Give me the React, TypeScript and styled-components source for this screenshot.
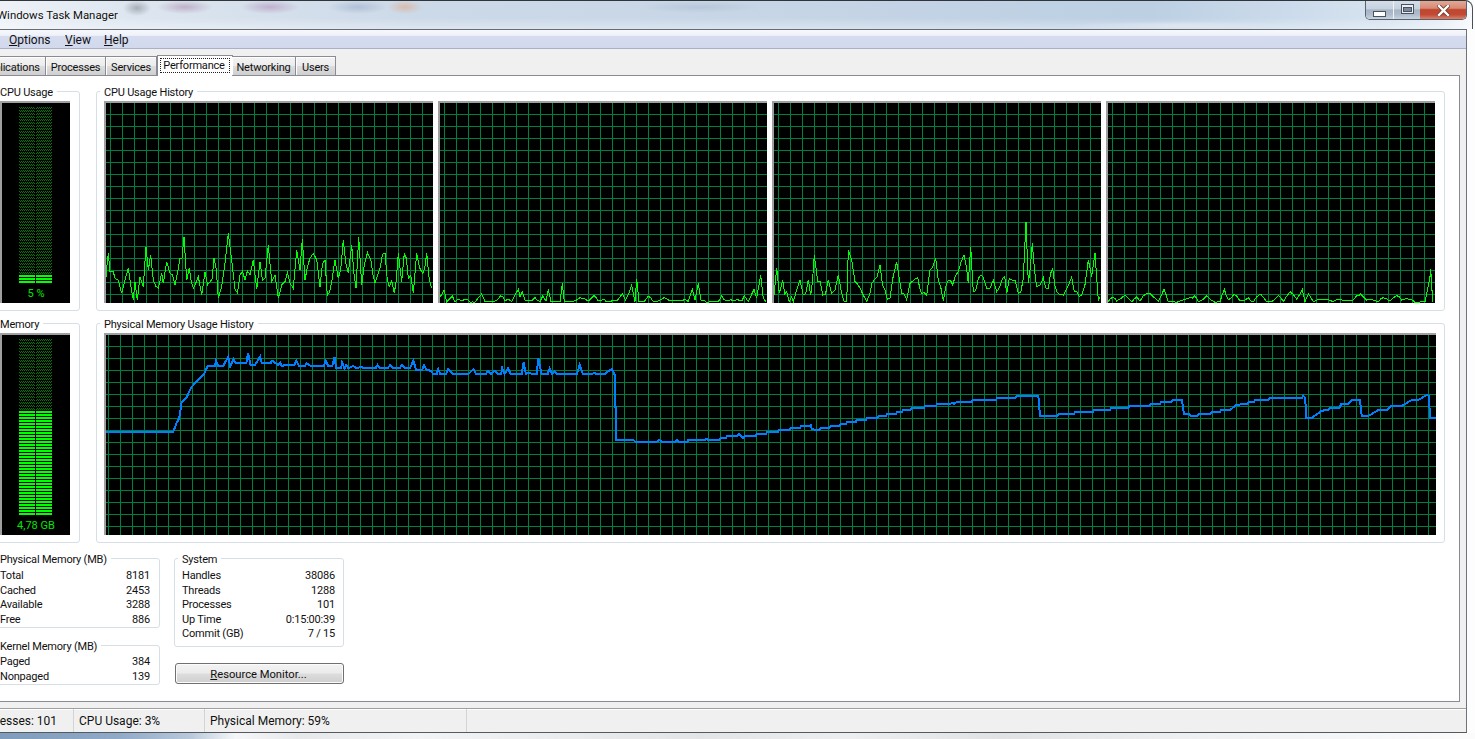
import React, { useId } from "react";
import styled, { createGlobalStyle } from "styled-components";

type Pt = [number, number];

const GlobalStyle = createGlobalStyle`
  html, body { margin: 0; padding: 0; background: #fff; overflow: hidden; }
  * { box-sizing: border-box; }
`;

const FONT = `"Roboto", "Noto Sans", "Liberation Sans", sans-serif`;

const Frame = styled.div`
  width: 1475px;
  height: 739px;
  display: flex;
  flex-direction: column;
  overflow: hidden;
  background: #fdfdfe;
  font-family: ${FONT};
  font-size: 11px;
  letter-spacing: -0.2px;
  color: #111;
`;

const TitleBar = styled.div`
  height: 29px;
  flex: none;
  display: flex;
  align-items: flex-start;
  margin-right: 2px;
  border-top: 1px solid #30353a;
  border-right: 1px solid #4a5056;
  border-top-right-radius: 8px;
  background:
    radial-gradient(ellipse 14px 8px at 137px 7px, #a8aeb8 0%, transparent 100%),
    radial-gradient(ellipse 28px 7px at 185px 6px, #bfb0c9 0%, transparent 100%),
    radial-gradient(ellipse 30px 7px at 270px 6px, #c0b0cd 0%, transparent 100%),
    radial-gradient(ellipse 30px 7px at 358px 6px, #b0c0d6 0%, transparent 100%),
    radial-gradient(ellipse 18px 7px at 405px 6px, #d6bcae 0%, transparent 100%),
    radial-gradient(ellipse 60px 6px at 700px 6px, #b8c8da 0%, transparent 100%),
    radial-gradient(ellipse 110px 5px at 1180px 25px, #dfe7ef 0%, transparent 100%),
    linear-gradient(180deg, rgba(255,255,255,0) 60%, rgba(255,255,255,.35) 100%),
    linear-gradient(90deg, #eef2f7 0px, #dde6f0 130px, #ccd9e8 420px, #c6d5e6 800px, #bccfe3 1150px, #d6e3f0 1380px, #e4edf5 1440px, #f8fafc 1472px);
`;

const TitleText = styled.div`
  margin-left: -3px;
  margin-top: 6px;
  line-height: 16px;
  font-size: 11.4px;
  letter-spacing: 0;
  color: #101010;
  text-shadow: 0 0 4px rgba(255,255,255,.8);
`;

const WindowButtons = styled.div`
  margin-left: auto;
  margin-right: 5px;
  display: flex;
  height: 19px;
  border: 1px solid #59626c;
  border-top: none;
  border-radius: 0 0 5px 5px;
  overflow: hidden;
`;

const WinButton = styled.div<{ $w: number; $close?: boolean }>`
  width: ${(p) => p.$w}px;
  display: flex;
  align-items: center;
  justify-content: center;
  border-left: ${(p) => (p.$close ? "none" : "1px solid #eef3f8")};
  &:first-child { border-left: none; }
  background: ${(p) =>
    p.$close
      ? "linear-gradient(180deg,#e0a896 0%,#d88b76 40%,#bf4730 48%,#c24a34 75%,#d8816c 100%)"
      : "linear-gradient(180deg,#d3dee9 0%,#c6d2df 42%,#a6b5c5 50%,#aebccb 75%,#c8d4e0 100%)"};
`;

const MinGlyph = styled.svg`
  margin-top: 8px;
`;

const MaxGlyph = styled.svg`
  margin-bottom: 2px;
`;

const ClientRow = styled.div`
  flex: 1;
  min-height: 0;
  display: flex;
`;

const Client = styled.div`
  width: 1467px;
  flex: none;
  display: flex;
  flex-direction: column;
  background: #f0f0f0;
  border-top: 1px solid #666c74;
  border-right: 1px solid #6d737a;
  border-bottom: 1px solid #555a60;
`;

const MenuBar = styled.div`
  height: 19px;
  flex: none;
  display: flex;
  align-items: center;
  padding-left: 9px;
  padding-top: 2px;
  background: linear-gradient(180deg, #f6f8fc 0%, #eef1f9 30%, #d6dcef 36%, #d2d9ed 100%);
  border-bottom: 1px solid #aab0c8;
`;

const MenuItem = styled.span<{ $w: number }>`
  width: ${(p) => p.$w}px;
  font-size: 12px;
  letter-spacing: 0;
  u { text-underline-offset: 1px; }
`;

const TabRow = styled.div`
  height: 27px;
  flex: none;
  display: flex;
  align-items: flex-end;
  margin-bottom: -1px;
  position: relative;
  z-index: 1;
`;

const Tab = styled.div<{ $w: number; $lead?: number }>`
  width: ${(p) => p.$w}px;
  margin-left: ${(p) => p.$lead ?? 0}px;
  height: 19px;
  margin-bottom: 1px;
  display: flex;
  align-items: center;
  justify-content: center;
  padding-top: 2px;
  border: 1px solid #898c95;
  border-bottom: none;
  border-left-width: 0;
  background: linear-gradient(180deg, #f4f4f4 0%, #ececec 48%, #dddddd 52%, #cfcfcf 100%);
  box-shadow: inset 1px 1px 0 #fff;
`;

const ActiveTab = styled.div<{ $w: number }>`
  width: ${(p) => p.$w}px;
  height: 21px;
  padding: 2px;
  border: 1px solid #898c95;
  border-bottom: none;
  background: #fff;
  margin-right: -1px;
`;

const FocusRect = styled.div`
  height: 15px;
  display: flex;
  align-items: center;
  justify-content: center;
  padding-right: 2px;
  border: 1px dotted #222;
`;

const Panel = styled.div`
  height: 627px;
  flex: none;
  width: 1460px;
  background: #fff;
  border-top: 1px solid #898c95;
  border-right: 1px solid #898c95;
  border-bottom: 1px solid #898c95;
  padding-top: 15px;
  display: flex;
  flex-direction: column;
  gap: 12px;
  overflow: hidden;
`;

const GraphRow = styled.div`
  display: flex;
  gap: 16px;
  margin-left: -8px;
`;

const Group = styled.div<{ $w: number; $h?: number }>`
  position: relative;
  width: ${(p) => p.$w}px;
  ${(p) => (p.$h ? `height: ${p.$h}px;` : "")}
  flex: none;
  border: 1px solid #d5dfe5;
  border-radius: 3px;
`;

const GraphGroup = styled(Group)`
  padding: 9px 0 7px 7px;
`;

const Legend = styled.span`
  position: absolute;
  left: 3px;
  top: -6px;
  padding: 0 4px;
  background: #fff;
  line-height: 14px;
  white-space: nowrap;
`;

const MeterBox = styled.div`
  width: 70px;
  height: 202px;
  border-top: 2px solid #a0a0a0;
  border-left: 2px solid #a0a0a0;
  background: #000;
  padding: 4px 0 0 17px;
`;

const MeterSvg = styled.svg`
  display: block;
`;

const MeterCaption = styled.div`
  margin-left: -17px;
  margin-top: 4px;
  line-height: 14px;
  text-align: center;
  letter-spacing: 0;
  color: #00e800;
`;

const ChartStrip = styled.div`
  display: flex;
  gap: 5px;
`;

const ChartSvg = styled.svg`
  display: block;
  flex: none;
  box-sizing: content-box;
  background: #000;
  border-top: 2px solid #a0a0a0;
  border-left: 2px solid #a0a0a0;
`;

const StatsArea = styled.div`
  margin-top: 3px;
  margin-left: -8px;
  display: flex;
  gap: 14px;
`;

const StatsColumn = styled.div<{ $gap: number }>`
  display: flex;
  flex-direction: column;
  gap: ${(p) => p.$gap}px;
`;

const StatsBody = styled.div<{ $top: number; $right: number }>`
  padding: ${(p) => p.$top}px ${(p) => p.$right}px 0 7px;
`;

const StatRow = styled.div`
  display: flex;
  justify-content: space-between;
  height: 14.5px;
  line-height: 14.5px;
`;

const ResourceButton = styled.div`
  margin-left: 1px;
  width: 169px;
  height: 21px;
  display: flex;
  align-items: center;
  justify-content: center;
  padding: 1px 2px 0 0;
  border: 1px solid #707070;
  border-radius: 3px;
  font-size: 11.2px;
  letter-spacing: 0;
  background: linear-gradient(180deg, #f3f3f3 0%, #ebebeb 48%, #dddddd 52%, #cfcfcf 100%);
  box-shadow: inset 0 0 0 1px #fbfbfb;
`;

const StatusBar = styled.div`
  margin-top: 6px;
  flex: 1;
  min-height: 0;
  display: flex;
  align-items: center;
  overflow: hidden;
  background: #f0f0f0;
  border-top: 1px solid #a0a0a0;
  box-shadow: inset 0 1px 0 #fff;
  font-size: 12px;
  letter-spacing: 0;
`;

const StatusCell = styled.div<{ $w: number; $lead?: number }>`
  width: ${(p) => p.$w}px;
  flex: none;
  margin-left: ${(p) => p.$lead ?? 0}px;
  padding-left: 5px;
  height: 100%;
  display: flex;
  align-items: center;
  padding-top: 1px;
  white-space: nowrap;
  border-right: 1px solid #d4d4d4;
`;

const SideGlass = styled.div`
  flex: 1;
  background: #fdfdfe;
`;

const BottomGlass = styled.div`
  height: 6px;
  flex: none;
  background: linear-gradient(90deg, #7f9cbc 0, #90aac8 120px, #b8c8da 190px, #f4f6f8 235px, #e6e8ea 300px, #f2f3f4 420px, #e2e4e6 700px, #eceef0 850px, #e0e2e4 1000px, #eef0f2 1200px, #fbfbfc 1475px);
`;

/* ---------- chart data: traced from the reference ---------- */
const cpu1: Pt[] = [[318,230],[320,205],[325,160],[330,215],[340,215],[345,235],[355,240],[365,280],[375,240],[385,205],[392,255],[400,300],[405,245],[412,300],[420,230],[430,260],[438,140],[445,210],[452,165],[460,240],[475,265],[485,220],[490,250],[500,185],[510,220],[525,255],[540,175],[552,110],[560,240],[568,205],[580,265],[595,230],[605,285],[615,215],[630,245],[642,175],[655,295],[665,260],[675,190],[685,100],[695,180],[705,268],[720,225],[735,240],[750,225],[760,180],[770,268],[780,185],[795,235],[805,135],[815,245],[825,225],[835,295],[845,255],[855,245],[870,250],[880,265],[890,150],[900,210],[907,118],[915,240],[930,175],[940,160],[960,260],[975,180],[982,285],[995,245],[1005,180],[1015,235],[1030,120],[1045,220],[1055,135],[1068,265],[1076,112],[1085,255],[1093,195],[1112,178],[1125,250],[1140,205],[1155,160],[1168,260],[1183,280],[1195,160],[1205,245],[1213,160],[1225,235],[1240,280],[1250,160],[1268,220],[1280,160],[1295,265]];
const cpu2: Pt[] = [[0,290],[12,270],[20,305],[37,288],[45,305],[55,298],[65,303],[75,298],[85,300],[90,307],[105,307],[125,282],[135,305],[165,303],[182,287],[195,303],[205,297],[215,305],[225,285],[235,268],[240,290],[247,275],[255,300],[265,303],[285,293],[300,305],[308,288],[318,303],[325,268],[333,305],[360,305],[367,250],[373,305],[395,305],[420,293],[445,303],[462,287],[475,303],[493,298],[505,305],[530,303],[547,282],[557,300],[575,255],[585,305],[590,238],[597,305],[612,305],[625,288],[640,305],[672,293],[690,303],[725,303],[735,298],[745,305],[757,268],[765,300],[775,250],[783,300],[800,307],[835,305],[845,287],[860,303],[885,303],[890,298],[905,303],[913,288],[925,305],[942,268],[950,295],[962,225],[970,295],[978,305]];
const cpu3: Pt[] = [[12,285],[20,205],[28,280],[38,240],[50,275],[58,305],[65,290],[70,305],[80,270],[90,240],[100,285],[115,240],[122,285],[133,165],[143,245],[158,285],[175,240],[185,280],[205,225],[215,280],[230,305],[235,150],[245,180],[255,245],[270,265],[280,285],[290,305],[300,280],[312,240],[330,195],[345,270],[360,295],[380,185],[395,280],[410,300],[420,250],[443,232],[455,280],[470,285],[480,210],[497,175],[505,240],[520,303],[535,240],[548,255],[565,215],[582,165],[595,250],[602,140],[610,275],[625,235],[640,232],[650,265],[670,240],[680,275],[698,235],[710,280],[725,240],[745,280],[760,235],[768,65],[775,250],[787,130],[800,260],[820,233],[835,265],[848,205],[860,275],[880,285],[905,232],[920,275],[935,285],[955,180],[965,230],[975,160],[985,300],[990,290]];
const cpu4: Pt[] = [[25,305],[38,292],[50,303],[75,285],[95,305],[110,290],[120,303],[130,287],[150,280],[175,303],[192,268],[205,305],[230,307],[270,293],[285,287],[295,305],[320,287],[345,307],[360,305],[373,268],[385,300],[402,282],[420,303],[445,293],[460,305],[482,282],[500,305],[515,305],[535,287],[550,305],[570,275],[590,297],[607,268],[615,305],[625,282],[640,305],[675,298],[700,305],[715,298],[755,303],[770,287],[782,282],[800,300],[835,305],[850,293],[870,303],[890,287],[905,300],[930,298],[945,307],[975,305],[990,230],[992,207],[998,305]];

const mem1: Pt[] = [[15,305],[213,305],[222,280],[230,265],[237,218],[250,205],[265,172],[285,150],[303,130],[313,108],[333,108],[337,92],[343,108],[358,108],[372,80],[378,108],[388,88],[395,100],[425,100],[430,68],[437,105],[450,105],[465,80],[470,100],[495,100],[500,92],[510,100],[518,105],[523,98],[528,108],[540,104],[565,104],[570,92],[578,107],[595,107],[600,100],[610,107],[650,107],[656,92],[662,107],[675,107],[681,80],[686,115],[700,115],[703,98],[710,115],[715,105],[722,115],[735,108],[745,115],[758,110],[765,115],[800,115],[806,105],[813,115],[835,115],[843,105],[850,115],[870,115],[877,105],[885,115],[900,115],[910,92],[918,120],[935,120],[941,105],[948,120],[960,122],[968,132],[978,132],[982,117],[988,132],[1005,132],[1011,117],[1025,132],[1070,132],[1085,117],[1092,132],[1120,132],[1127,123],[1135,132],[1145,122],[1155,132],[1165,132],[1168,115],[1175,132],[1185,115],[1192,132],[1225,132],[1230,97],[1237,132],[1245,128],[1255,132],[1268,132],[1273,85],[1282,132],[1300,132],[1306,115],[1313,132],[1320,125],[1327,132],[1385,132],[1393,105],[1402,132],[1430,132],[1435,128],[1442,132],[1465,132],[1475,125],[1487,117],[1495,135],[1495,232],[1498,232],[1498,330]];
const mem2: Pt[] = [[48,210],[100,210],[106,215],[170,215],[177,210],[185,215],[225,215],[231,210],[237,215],[262,215],[265,210],[315,210],[320,206],[325,210],[358,210],[362,204],[378,204],[382,198],[412,198],[417,192],[424,198],[428,204],[435,198],[467,198],[470,192],[497,192],[502,186],[533,186],[537,180],[568,180],[572,174],[600,174],[604,168],[628,168],[632,165],[636,178],[658,180],[662,174],[688,174],[692,168],[718,168],[722,162],[738,162],[742,156],[767,156],[771,150],[797,150],[802,144],[832,144],[836,138],[858,138],[862,132],[888,132],[892,126],[905,126],[910,120],[930,120],[935,114],[972,114],[976,108],[1007,108],[1012,102],[1050,102],[1057,98],[1062,102],[1070,96],[1115,96],[1118,90],[1187,90],[1192,84],[1246,84],[1252,77]];
const mem3: Pt[] = [[0,77],[25,77],[30,138],[80,138],[86,132],[132,132],[136,126],[188,126],[193,120],[240,120],[244,114],[295,114],[298,108],[358,108],[362,102],[390,102],[394,96],[424,96],[430,90],[456,90],[462,132],[478,132],[482,138],[500,138],[506,132],[540,132],[545,126],[570,126],[574,120],[600,120],[620,104],[652,102],[656,96],[672,96],[676,90],[715,90],[720,84],[815,84],[820,77],[826,84],[828,144],[845,144],[875,122],[895,120],[900,114],[928,114],[934,102],[955,102],[965,90],[990,90],[995,138],[1015,138],[1045,120],[1072,120],[1082,108],[1115,108],[1145,90],[1165,90],[1190,75],[1198,78],[1199,144],[1218,144]];

const toLocal = (pts: Pt[], originX: number, originY: number, left: number, top: number, scaleX = 3) =>
  pts.map(([x, y]) => [originX + x / scaleX - left, originY + y / 3 - top] as Pt);
const toAttr = (pts: Pt[]) => pts.map(([x, y]) => `${x.toFixed(1)},${y.toFixed(1)}`).join(" ");

/* adds the fine jitter of a sampled CPU trace between the traced peaks */
const roughen = (pts: Pt[], amp: number, seed: number): Pt[] => {
  let s = seed;
  const next = () => {
    s = (s * 1103515245 + 12345) & 0x7fffffff;
    return s / 0x7fffffff;
  };
  const out: Pt[] = [];
  pts.forEach((p, i) => {
    out.push(p);
    const q = pts[i + 1];
    if (q && q[0] - p[0] >= 3.5) {
      const y = (p[1] + q[1]) / 2 + (next() - 0.5) * 2 * amp;
      out.push([(p[0] + q[0]) / 2, Math.min(199, Math.max(0, y))]);
    }
  });
  return out;
};

const cpuLine = (pts: Pt[], originX: number, left: number, amp: number, seed: number) =>
  toAttr(roughen(toLocal(pts, originX, 200, left, 103), amp, seed));

const memoryLine = toAttr([
  ...toLocal(mem1, 100, 330, 106, 335, 2.904),
  ...toLocal(mem2, 600, 370, 106, 335),
  ...toLocal(mem3, 1030, 370, 106, 335),
]);

const Chart = ({ width, gridX, points, color, stroke }: { width: number; gridX: number; points: string; color: string; stroke: number }) => {
  const id = useId().replace(/[^a-zA-Z0-9]/g, "");
  return (
    <ChartSvg width={width} height={200} viewBox={`0 0 ${width} 200`} shapeRendering="crispEdges">
      <defs>
        <pattern id={id} width={12} height={12} patternUnits="userSpaceOnUse">
          <rect x={gridX} y={0} width={1} height={12} fill="#008040" />
          <rect x={0} y={11} width={12} height={1} fill="#008040" />
        </pattern>
      </defs>
      <rect width={width} height={200} fill={`url(#${id})`} />
      <polyline points={points} fill="none" stroke={color} strokeWidth={stroke} />
    </ChartSvg>
  );
};

const Meter = ({ lit, caption }: { lit: number; caption: string }) => {
  const id = useId().replace(/[^a-zA-Z0-9]/g, "");
  const rows = Array.from({ length: 59 }, (_, i) => i);
  return (
    <MeterBox>
      <MeterSvg width={33} height={176} shapeRendering="crispEdges">
        <defs>
          <pattern id={id} width={2} height={3} patternUnits="userSpaceOnUse">
            <rect x={0} y={0} width={1} height={1} fill="#007c00" />
            <rect x={1} y={1} width={1} height={1} fill="#007c00" />
          </pattern>
        </defs>
        {rows.map((r) =>
          [0, 17].map((x) =>
            r >= 59 - lit ? (
              <rect key={`${r}-${x}`} x={x} y={r * 3} width={16} height={2} fill="#00ff00" />
            ) : (
              <rect key={`${r}-${x}`} x={x} y={r * 3} width={16} height={2} fill={`url(#${id})`} />
            )
          )
        )}
      </MeterSvg>
      <MeterCaption>{caption}</MeterCaption>
    </MeterBox>
  );
};

const physical = [["Total", "8181"], ["Cached", "2453"], ["Available", "3288"], ["Free", "886"]];
const kernel = [["Paged", "384"], ["Nonpaged", "139"]];
const system = [["Handles", "38086"], ["Threads", "1288"], ["Processes", "101"], ["Up Time", "0:15:00:39"], ["Commit (GB)", "7 / 15"]];

const Stats = ({ rows, top, right }: { rows: string[][]; top: number; right: number }) => (
  <StatsBody $top={top} $right={right}>
    {rows.map(([k, v]) => (
      <StatRow key={k}>
        <span>{k}</span>
        <span>{v}</span>
      </StatRow>
    ))}
  </StatsBody>
);

export default function App() {
  return (
    <Frame>
      <GlobalStyle />
      <TitleBar>
        <TitleText>Windows Task Manager</TitleText>
        <WindowButtons>
          <WinButton $w={27}>
            <MinGlyph width="13" height="6" viewBox="0 0 13 6">
              <rect x=".5" y=".5" width="12" height="5" fill="#fff" stroke="#4a525c" />
            </MinGlyph>
          </WinButton>
          <WinButton $w={27}>
            <MaxGlyph width="13" height="10" viewBox="0 0 13 10">
              <rect x=".5" y=".5" width="12" height="9" fill="#e8eef4" stroke="#4a525c" />
              <rect x="2.5" y="3.5" width="8" height="4" fill="#7a8a9c" stroke="#4a525c" />
            </MaxGlyph>
          </WinButton>
          <WinButton $w={46} $close>
            <svg width="13" height="11" viewBox="0 0 13 11">
              <path d="M2 1 L11 10 M11 1 L2 10" stroke="#6c3a30" strokeWidth="4" strokeLinecap="square" fill="none" />
              <path d="M2 1 L11 10 M11 1 L2 10" stroke="#fff" strokeWidth="2.4" strokeLinecap="square" fill="none" />
            </svg>
          </WinButton>
        </WindowButtons>
      </TitleBar>

      <ClientRow>
        <Client>
          <MenuBar>
            <MenuItem $w={56}><u>O</u>ptions</MenuItem>
            <MenuItem $w={39}><u>V</u>iew</MenuItem>
            <MenuItem $w={40}><u>H</u>elp</MenuItem>
          </MenuBar>
          <TabRow>
            <Tab $w={70} $lead={-24}>Applications</Tab>
            <Tab $w={60}>Processes</Tab>
            <Tab $w={51}>Services</Tab>
            <ActiveTab $w={76}><FocusRect>Performance</FocusRect></ActiveTab>
            <Tab $w={64}>Networking</Tab>
            <Tab $w={40}>Users</Tab>
          </TabRow>
          <Panel>
            <GraphRow>
              <GraphGroup $w={88}>
                <Legend>CPU Usage</Legend>
                <Meter lit={3} caption="5 %" />
              </GraphGroup>
              <GraphGroup $w={1349}>
                <Legend>CPU Usage History</Legend>
                <ChartStrip>
                  <Chart width={327} gridX={4} color="#00ff00" stroke={1} points={cpuLine(cpu1, 0, 106, 11, 7)} />
                  <Chart width={327} gridX={4} color="#00ff00" stroke={1} points={cpuLine(cpu2, 440, 440, 1.5, 21)} />
                  <Chart width={327} gridX={4} color="#00ff00" stroke={1} points={cpuLine(cpu3, 770, 774, 9, 33)} />
                  <Chart width={327} gridX={4} color="#00ff00" stroke={1} points={cpuLine(cpu4, 1100, 1108, 1.5, 49)} />
                </ChartStrip>
              </GraphGroup>
            </GraphRow>
            <GraphRow>
              <GraphGroup $w={88}>
                <Legend>Memory</Legend>
                <Meter lit={35} caption="4,78 GB" />
              </GraphGroup>
              <GraphGroup $w={1349}>
                <Legend>Physical Memory Usage History</Legend>
                <Chart width={1330} gridX={2} color="#0080ff" stroke={2} points={memoryLine} />
              </GraphGroup>
            </GraphRow>
            <StatsArea>
              <StatsColumn $gap={17}>
                <Group $w={168} $h={70}>
                  <Legend>Physical Memory (MB)</Legend>
                  <Stats rows={physical} top={10} right={9} />
                </Group>
                <Group $w={168} $h={40}>
                  <Legend>Kernel Memory (MB)</Legend>
                  <Stats rows={kernel} top={9} right={9} />
                </Group>
              </StatsColumn>
              <StatsColumn $gap={16}>
                <Group $w={170} $h={89}>
                  <Legend>System</Legend>
                  <Stats rows={system} top={10} right={8} />
                </Group>
                <ResourceButton><span><u>R</u>esource Monitor...</span></ResourceButton>
              </StatsColumn>
            </StatsArea>
          </Panel>
          <StatusBar>
            <StatusCell $w={104} $lead={-30}>Processes: 101</StatusCell>
            <StatusCell $w={131}>CPU Usage: 3%</StatusCell>
            <StatusCell $w={262}>Physical Memory: 59%</StatusCell>
          </StatusBar>
        </Client>
        <SideGlass />
      </ClientRow>
      <BottomGlass />
    </Frame>
  );
}
